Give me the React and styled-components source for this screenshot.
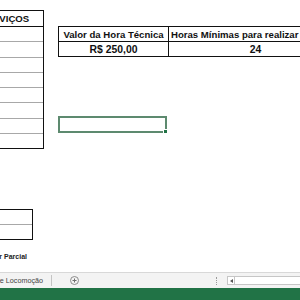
import styled, { createGlobalStyle } from "styled-components";

const GlobalStyle = createGlobalStyle`
  html, body {
    margin: 0;
    padding: 0;
    width: 300px;
    height: 300px;
    overflow: hidden;
    background: #ffffff;
    font-family: "Liberation Sans", Arial, sans-serif;
  }
`;

const Window = styled.div`
  display: flex;
  flex-direction: column;
  width: 300px;
  height: 300px;
  overflow: hidden;
`;

const Sheet = styled.div`
  display: flex;
  flex-direction: row;
  align-items: flex-start;
  height: 272px;
  overflow: hidden;
  background: #ffffff;
`;

const LeftColumn = styled.div`
  display: flex;
  flex-direction: column;
  align-items: flex-end;
  flex: 0 0 44px;
  width: 44px;
  padding-top: 10px;
`;

const ServiceTable = styled.div`
  display: flex;
  flex-direction: column;
  flex-shrink: 0;
  width: 78px;
  border-top: 1px solid #111;
  border-right: 1px solid #111;
  box-sizing: border-box;
`;

const ServiceHeader = styled.div`
  height: 16px;
  box-sizing: border-box;
  border-bottom: 1px solid #111;
  display: flex;
  align-items: center;
  justify-content: center;
  font-weight: bold;
  font-size: 9.6px;
  color: #111;
  white-space: nowrap;
`;

const ServiceRow = styled.div`
  height: 15.25px;
  box-sizing: border-box;
  border-bottom: 1px solid ${(p) => (p.$last ? "#111" : "#a8a8a8")};
`;

const SmallTable = styled.div`
  display: flex;
  flex-direction: column;
  flex-shrink: 0;
  width: 70px;
  margin-top: 60.25px;
  margin-right: 11px;
  border-top: 1px solid #111;
  border-right: 1px solid #111;
  box-sizing: border-box;
`;

const SmallRow = styled.div`
  height: 15px;
  box-sizing: border-box;
  border-bottom: 1px solid ${(p) => (p.$last ? "#111" : "#a8a8a8")};
`;

const FootLabel = styled.div`
  margin-top: 12px;
  margin-right: 17px;
  font-size: 7px;
  line-height: 10px;
  font-weight: bold;
  color: #222;
  white-space: nowrap;
`;

const RightColumn = styled.div`
  display: flex;
  flex-direction: column;
  flex-shrink: 0;
  margin-left: 14px;
  padding-top: 26px;
`;

const RateTable = styled.div`
  display: grid;
  grid-template-columns: 110px 174px;
  border-top: 1px solid #111;
  border-left: 1px solid #111;
`;

const RateCell = styled.div`
  height: 15px;
  box-sizing: border-box;
  border-right: 1px solid #111;
  border-bottom: 1px solid #111;
  display: flex;
  align-items: center;
  justify-content: ${(p) => (p.$left ? "flex-start" : "center")};
  padding-left: ${(p) => (p.$left ? "2px" : "0")};
  overflow: hidden;
  white-space: nowrap;
  font-weight: bold;
  font-size: ${(p) => (p.$value ? "10.4px" : "9.6px")};
  color: #111;
`;

const SelectedCell = styled.div`
  position: relative;
  width: 109px;
  height: 17px;
  margin-top: 59px;
  box-sizing: border-box;
  border: 2px solid #5d8a6f;
`;

const FillHandle = styled.div`
  position: absolute;
  right: -3px;
  bottom: -3px;
  width: 3px;
  height: 3px;
  background: #217346;
  border: 1px solid #ffffff;
`;

const TabBar = styled.div`
  display: flex;
  flex-direction: row;
  align-items: center;
  height: 16px;
  box-sizing: border-box;
  border-top: 1px solid #d8d8d8;
  background: #f3f3f3;
  overflow: hidden;
`;

const Tab = styled.div`
  display: flex;
  justify-content: flex-end;
  flex: 0 0 48px;
  width: 48px;
  padding-right: 5px;
  box-sizing: border-box;
  overflow: hidden;
  white-space: nowrap;
  font-size: 7.2px;
  color: #444;
`;

const Separator = styled.div`
  flex: 0 0 1px;
  width: 1px;
  height: 11px;
  margin-left: 3px;
  background: #c4c4c4;
`;

const AddButton = styled.div`
  flex: 0 0 auto;
  width: 9px;
  height: 9px;
  margin-left: 18px;
  box-sizing: border-box;
  border: 1px solid #8c8c8c;
  border-radius: 50%;
  display: flex;
  align-items: center;
  justify-content: center;
`;

const Dots = styled.div`
  flex: 0 0 1px;
  width: 0;
  height: 8px;
  margin-left: 137px;
  border-left: 1px dotted #9a9a9a;
`;

const ScrollArrow = styled.div`
  flex: 0 0 auto;
  width: 8px;
  height: 9px;
  margin-left: 9px;
  box-sizing: border-box;
  border: 1px solid #c6c6c6;
  background: #ffffff;
  display: flex;
  align-items: center;
  justify-content: center;
`;

const ScrollTrack = styled.div`
  flex: 0 0 80px;
  height: 9px;
  margin-left: -1px;
  box-sizing: border-box;
  border: 1px solid #c6c6c6;
  background: #ffffff;
`;

const StatusBar = styled.div`
  height: 12px;
  background: #217346;
`;

const serviceRows = [0, 1, 2, 3, 4, 5, 6, 7];

export default function App() {
  return (
    <>
      <GlobalStyle />
      <Window>
        <Sheet>
          <LeftColumn>
            <ServiceTable>
              <ServiceHeader>SERVIÇOS</ServiceHeader>
              {serviceRows.map((i) => (
                <ServiceRow key={i} $last={i === serviceRows.length - 1} />
              ))}
            </ServiceTable>
            <SmallTable>
              <SmallRow />
              <SmallRow $last />
            </SmallTable>
            <FootLabel>Valor Parcial</FootLabel>
          </LeftColumn>

          <RightColumn>
            <RateTable>
              <RateCell>Valor da Hora Técnica</RateCell>
              <RateCell $left>Horas Mínimas para realizar o serviço</RateCell>
              <RateCell $value>R$ 250,00</RateCell>
              <RateCell $value>24</RateCell>
            </RateTable>
            <SelectedCell>
              <FillHandle />
            </SelectedCell>
          </RightColumn>
        </Sheet>

        <TabBar>
          <Tab>Despesas de Locomoção</Tab>
          <Separator />
          <AddButton>
            <svg width="5" height="5" viewBox="0 0 5 5">
              <path d="M2.5 0.5v4M0.5 2.5h4" stroke="#6f6f6f" strokeWidth="1" />
            </svg>
          </AddButton>
          <Dots />
          <ScrollArrow>
            <svg width="3" height="4" viewBox="0 0 3 4">
              <path d="M3 0L0 2L3 4Z" fill="#555" />
            </svg>
          </ScrollArrow>
          <ScrollTrack />
        </TabBar>

        <StatusBar />
      </Window>
    </>
  );
}
